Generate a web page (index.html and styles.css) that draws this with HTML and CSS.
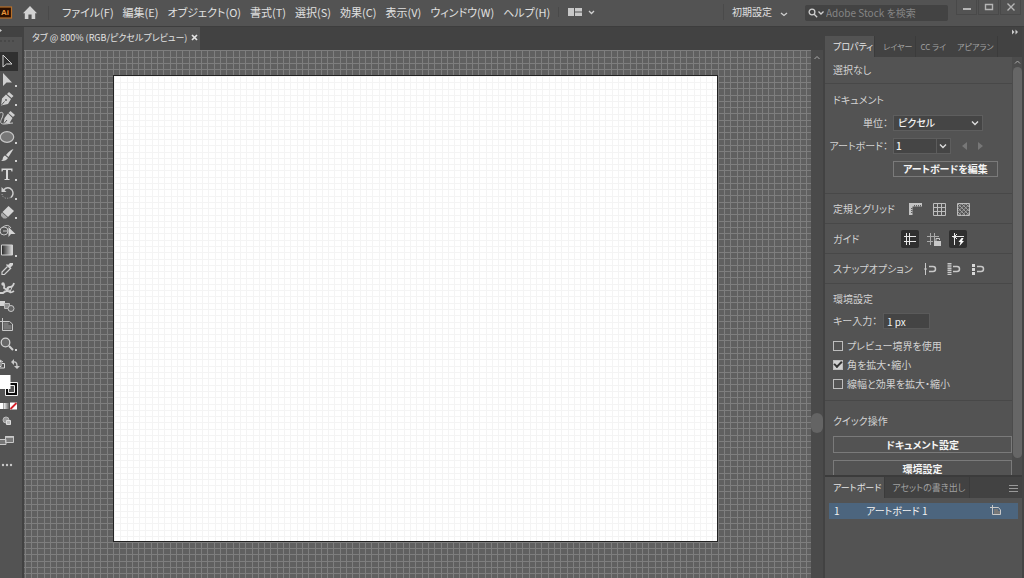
FILE: index.html
```html
<!DOCTYPE html>
<html lang="ja">
<head>
<meta charset="utf-8">
<title>タブ @ 800%</title>
<link rel="stylesheet" href="styles.css">
</head>
<body>
<div class="app">
  <header class="menubar">
    <svg class="logo" viewBox="0 0 13 14" aria-hidden="true"><rect x="-3" y="1" width="14.5" height="11" fill="#2a0f00" stroke="#b8702a" stroke-width="1.2"/><text class="logo-text" x="1" y="9">Ai</text></svg>
    <button class="home" aria-label="ホーム"><svg width="16" height="14" viewBox="0 0 16 14"><path d="M8 0 15 7.2H13.200V13H9.600V8.500H6.400V13H2.800V7.200H1Z" fill="#d2d2d2"/></svg></button>
    <nav class="menus">
      <button>ファイル(F)</button><button>編集(E)</button><button>オブジェクト(O)</button><button>書式(T)</button><button>選択(S)</button><button>効果(C)</button><button>表示(V)</button><button>ウィンドウ(W)</button><button>ヘルプ(H)</button>
    </nav>
    <button class="arrange" aria-label="ドキュメントのレイアウト"><svg width="28" height="10" viewBox="0 0 28 10"><path d="M0 1h6v8H0zM7 1h7v3.500H7zM7 5.500h7V9H7z" fill="#c8c8c8"/><path d="m21 4 2.500 2.500L26 4" fill="none" stroke="#d0d0d0" stroke-width="1.300"/></svg></button>
    <button class="workspace">初期設定<svg width="8" height="6" viewBox="0 0 8 6"><path d="m1 2 3 2.500L7 2" fill="none" stroke="#d0d0d0" stroke-width="1.300"/></svg></button>
    <label class="search"><svg width="17" height="10" viewBox="0 0 17 10"><g fill="none" stroke="#d0d0d0" stroke-width="1.300"><circle cx="4" cy="4" r="2.900"/><path d="m6.200 6.200 3 3M10.500 3.500 13 6l2.500-2.500"/></g></svg><input type="search" aria-label="検索" placeholder="Adobe Stock を検索"></label>
    <div class="window-buttons">
      <button aria-label="最小化"><svg width="10" height="8" viewBox="0 0 10 8"><path d="M1 6h8" stroke="#b5b5b5" stroke-width="2"/></svg></button>
      <button aria-label="最大化"><svg width="10" height="8" viewBox="0 0 10 8"><path d="M1.500 1.500h7v5h-7z" fill="none" stroke="#b5b5b5" stroke-width="1.400"/></svg></button>
      <button aria-label="閉じる"><svg width="10" height="8" viewBox="0 0 10 8"><path d="m1.500 .5 7 7m0-7-7 7" stroke="#b5b5b5" stroke-width="1.400"/></svg></button>
    </div>
  </header>

  <div class="workarea">
    <aside class="toolbar">
      <div class="toolbar-head"><svg width="6" height="7" viewBox="0 0 6 7"><path d="m0 2 2 1.500L0 5z" fill="#c8c8c8"/></svg></div>
      <div class="grip"></div>
      <div class="tools">
        <button class="on" aria-label="選択"><svg viewBox="0 0 22 19"><path d="M3 3v12l3.500-3H12Z" fill="none" stroke="#d4d4d4"/></svg></button>
        <button aria-label="ダイレクト選択"><svg viewBox="0 0 22 19"><path d="M3 2v13l3.500-3.500H12Z" fill="#cfcfcf"/><path class="dot" d="M15 14h2v2h-2z"/></svg></button>
        <button aria-label="ペン"><svg viewBox="0 0 22 19"><path d="m9 2 4.500 4-2 2L7 4zM6 4.500l5 4.500-3 5-7 1.500 1-7z" fill="#cfcfcf"/><path d="m1.500 15 3-3.500" stroke="#535353"/><circle cx="6" cy="10" r=".9" fill="#535353"/><path class="dot" d="M15 14h2v2h-2z"/></svg></button>
        <button aria-label="曲線"><svg viewBox="0 0 22 19"><path d="m10.500 2 4.500 4-2 2-4.500-4zM8 4.500 12.500 9l-3 5-6 1 1-6z" fill="#cfcfcf"/><path d="M0 4c3-2 4 1 2 5s-2 6 2 6 6-1 9-1" fill="none" stroke="#cfcfcf"/><path d="m4 14.500 3-3.500" stroke="#535353"/></svg></button>
        <button aria-label="楕円形"><svg viewBox="0 0 22 19"><ellipse cx="7" cy="9" rx="6.700" ry="5.300" fill="#777" stroke="#c8c8c8" stroke-width="1.200"/><path class="dot" d="M15 14h2v2h-2z"/></svg></button>
        <button aria-label="ブラシ"><svg viewBox="0 0 22 19"><path d="M13.500 3 8.500 11 6 9Q10 4 13.500 3M5 9.500l3 2.500Q6 15.500 1 15q2-1 2-3.500 1-2 2-2" fill="#d4d4d4"/><path class="dot" d="M15 14h2v2h-2z"/></svg></button>
        <button aria-label="文字"><svg viewBox="0 0 22 19"><path d="M1.500 3.500h11v3h-1l-.5-1.500H8V14h1.500v1h-5v-1H6V5H3l-.5 1.500h-1z" fill="#d8d8d8"/><path class="dot" d="M15 14h2v2h-2z"/></svg></button>
        <button aria-label="回転"><svg viewBox="0 0 22 19"><path d="M3.500 6Q8 1.500 12 6q2.500 4-1 7.500" fill="none" stroke="#cfcfcf" stroke-width="1.400"/><path d="M1.500 3v5h5z" fill="#cfcfcf"/><path d="M2 10q1 6 9 3.500" fill="none" stroke="#bbb" stroke-dasharray="1 1.500"/><path class="dot" d="M15 14h2v2h-2z"/></svg></button>
        <button aria-label="消しゴム"><svg viewBox="0 0 22 19"><path d="m8.500 3 5.500 5-6 6-5.500-5z" fill="#d4d4d4"/><path d="m2 9.500 5.500 5-1.500 1H3.500L1 13v-2z" fill="#a9a9a9"/><path class="dot" d="M15 14h2v2h-2z"/></svg></button>
        <button aria-label="シェイプ形成"><svg viewBox="0 0 22 19"><g fill="none" stroke="#c4c4c4"><circle cx="4" cy="9" r="4"/><path d="M2 5.500Q8 1 11 6M3 9h5"/></g><path d="M8.500 5v10l2.500-3h4.500z" fill="#d4d4d4"/></svg></button>
        <button aria-label="グラデーション"><svg viewBox="0 0 22 19"><defs><linearGradient id="grad"><stop stop-color="#222"/><stop offset="1" stop-color="#ddd"/></linearGradient></defs><path d="M1.500 4h11v10h-11z" fill="url(#grad)" stroke="#d0d0d0"/><path class="dot" d="M15 14h2v2h-2z"/></svg></button>
        <button aria-label="スポイト"><svg viewBox="0 0 22 19"><path d="m13 3-3 0-2 2-1-1-1 1 4.500 4.500 1-1-1-1 2.500-2.500z" fill="#d4d4d4"/><path d="M7.500 6.500 2 12v2.500h2.500L10 9" fill="none" stroke="#d0d0d0" stroke-width="1.200"/></svg></button>
        <button aria-label="パペットワープ"><svg viewBox="0 0 22 19"><path d="M0 14h3q2-2 4-2t3 1 4-1M3 5q2 1 1 4l3 2q0-3 3-3t4-4" fill="none" stroke="#cfcfcf" stroke-width="1.800"/><circle cx="3" cy="5" r="1.700" fill="#cfcfcf"/><path d="m8 9 2 4 2-5" stroke="#cfcfcf" fill="none"/></svg></button>
        <button aria-label="ブレンド"><svg viewBox="0 0 22 19"><path d="M0 4h5v5H0z" fill="#d4d4d4"/><path d="M4.500 6.500h5v5h-5z" fill="#8d8d8d" stroke="#bbb"/><circle cx="11" cy="11.500" r="3" fill="#656565" stroke="#c8c8c8"/></svg></button>
        <button aria-label="アートボード"><svg viewBox="0 0 22 19"><path d="M2.500 2v12.500h10V8l-3-2.500H0" fill="none" stroke="#c8c8c8"/><path d="M3.500 6.500h5v2.500h3v4.500h-8z" fill="#777"/></svg></button>
        <button aria-label="ズーム"><svg viewBox="0 0 22 19"><circle cx="5.500" cy="7.500" r="4.300" fill="#686868" stroke="#d0d0d0" stroke-width="1.300"/><path d="m9 11 4 4" stroke="#d0d0d0" stroke-width="2"/><path class="dot" d="M15 14h2v2h-2z"/></svg></button>
      </div>
      <div class="color-tools">
        <button aria-label="塗りと線を入れ替え"><svg width="22" height="16" viewBox="0 0 22 16"><path d="M-2 6.500h3v5h-3M2 8.500h2.500v4.500H-1M0 5l3 2" fill="none" stroke="#ddd"/><path d="M13 7q4-1 4 4" fill="none" stroke="#c8c8c8" stroke-width="1.300"/><path d="m11 7 3-3v6zM14 11h6l-3 3z" fill="#c8c8c8"/></svg></button>
        <button aria-label="塗りと線"><svg width="22" height="28" viewBox="0 0 22 28"><path d="M5.500 11.500h12v13h-12z" fill="#090909" stroke="#eee"/><path d="M8.500 14.500h6v7h-6z" fill="#535353" stroke="#eee"/><path d="M0 4h10.500v14H0z" fill="#fff"/></svg></button>
        <button aria-label="カラー種別"><svg width="22" height="14" viewBox="0 0 22 14"><defs><linearGradient id="mini"><stop stop-color="#eee"/><stop offset="1" stop-color="#666"/></linearGradient></defs><path d="M0 4h3.500v6H0z" fill="#fff"/><path d="M4 4h5v6H4z" fill="url(#mini)"/><path d="M10 3.500h7v7h-7z" fill="#fff"/><path d="m10.500 10 6-6" stroke="#d3222b" stroke-width="1.800"/></svg></button>
        <button aria-label="描画方法"><svg width="22" height="18" viewBox="0 0 22 18"><circle cx="6" cy="7" r="3" fill="#999" stroke="#bbb"/><path d="M6.500 7.500h4v4h-4z" fill="#bbb" stroke="#ddd"/></svg></button>
        <button aria-label="スクリーンモード"><svg width="22" height="22" viewBox="0 0 22 22"><path d="M5.500 5.500h8v6h-8zM-1 8.500h7v5h-7z" fill="#777" stroke="#c8c8c8"/><path d="M5 6h9" stroke="#ccc" stroke-width="1.500"/></svg></button>
        <button aria-label="ツールバーを編集"><svg width="22" height="24" viewBox="0 0 22 24"><g fill="#c8c8c8"><circle cx="3" cy="12" r="1.200"/><circle cx="7" cy="12" r="1.200"/><circle cx="11" cy="12" r="1.200"/></g></svg></button>
      </div>
    </aside>

    <main class="document">
      <div class="doc-tabs"><div class="doc-tab"><span>タブ @ 800% (RGB/ピクセルプレビュー)</span><button aria-label="閉じる"><svg width="7" height="7" viewBox="0 0 7 7"><path d="m1 1 5 5m0-5L1 6" stroke="#e4e4e4" stroke-width="1.700"/></svg></button></div></div>
      <div class="doc-view">
        <div class="canvas">
          <svg class="grid" aria-hidden="true"><defs><pattern id="pasteboard" width="63" height="63" patternUnits="userSpaceOnUse"><path class="grid-line" d="M1.500 0v63M7.500 0v63M13.500 0v63M20.500 0v63M26.500 0v63M32.500 0v63M39.500 0v63M45.500 0v63M51.500 0v63M57.500 0v63M0 .5h63M0 7.500h63M0 13.500h63M0 19.500h63M0 26.500h63M0 32.500h63M0 38.500h63M0 45.500h63M0 51.500h63M0 57.500h63"/></pattern></defs><rect width="100%" height="100%" fill="url(#pasteboard)"/></svg>
          <div class="artboard"><svg class="grid" aria-hidden="true"><defs><pattern id="page" width="63" height="63" patternUnits="userSpaceOnUse"><path class="page-line" d="M.5 0v63M6.500 0v63M13.500 0v63M19.500 0v63M25.500 0v63M31.500 0v63M38.500 0v63M44.500 0v63M50.500 0v63M57.500 0v63M0 .5h63M0 6.500h63M0 13.500h63M0 19.500h63M0 25.500h63M0 31.500h63M0 38.500h63M0 44.500h63M0 50.500h63M0 57.500h63"/></pattern></defs><rect width="100%" height="100%" fill="url(#page)"/></svg></div>
        </div>
        <div class="vscroll"><svg width="12" height="14" viewBox="0 0 12 14"><path d="m3.500 9 2.500-2.500L8.500 9" fill="none" stroke="#aaa"/></svg><div class="vthumb"></div></div>
      </div>
    </main>

    <aside class="panels">
      <div class="panel-head"><svg width="8" height="6" viewBox="0 0 8 6"><path d="m1 .5 2.500 2.500L1 5.500zm3.500 0L7 3 4.500 5.500z" fill="#ccc"/></svg></div>
      <div class="tabs top-tabs"><button class="active">プロパティ</button><button>レイヤー</button><button class="bare">CC ライ</button><button>アピアラン</button></div>
      <div class="properties">
        <div class="sections">
          <section class="selection">選択なし</section>
          <section class="doc-settings">
            <h2>ドキュメント</h2>
            <div class="field"><label for="unit">単位：</label><span class="select unit"><select id="unit"><option>ピクセル</option></select><svg width="8" height="6" viewBox="0 0 8 6"><path d="m1 1.500 3 3 3-3" fill="none" stroke="#ddd" stroke-width="1.400"/></svg></span></div>
            <div class="field"><label for="board">アートボード：</label><span class="select board"><select id="board"><option>1</option></select><svg width="8" height="6" viewBox="0 0 8 6"><path d="m1 1.500 3 3 3-3" fill="none" stroke="#ddd" stroke-width="1.400"/></svg></span><button class="step" aria-label="前へ"><svg width="5" height="8" viewBox="0 0 5 8"><path d="M5 0v8L0 4z" fill="#777"/></svg></button><button class="step" aria-label="次へ"><svg width="5" height="8" viewBox="0 0 5 8"><path d="M0 0v8l5-4z" fill="#777"/></svg></button></div>
            <div class="field"><button class="outline edit">アートボードを編集</button></div>
          </section>
          <section class="icon-row wide"><span>定規とグリッド</span><div class="icons">
            <button aria-label="定規"><svg viewBox="0 0 18 18"><path d="M3 3h13v3.500H6.500V15H3z" fill="#c4c4c4"/><path d="M8.500 5v1.500M10.500 5v1.500M12.500 5v1.500M14.500 5v1.500M5 8.500h1.500M5 10.500h1.500M5 12.500h1.500" stroke="#606060"/></svg></button>
            <button aria-label="グリッド"><svg viewBox="0 0 18 18"><path d="M3.500 3.500h12v12h-12zM7.500 3v13M11.500 3v13M3 7.500h13M3 11.500h13" fill="none" stroke="#bdbdbd"/></svg></button>
            <button aria-label="透明グリッド"><svg viewBox="0 0 18 18"><path d="M3.500 3.500h12v12h-12z" fill="none" stroke="#bdbdbd"/><path d="M4 7.500 7.500 4M4 11.500 11.500 4M4 15.500 15.500 4M8 15.500 15.500 8M12 15.500l3.500-3.500M7.500 15.500 4 12M11.500 15.500 4 8M15.500 15.500 4 4M15.500 11.500 8 4M15.500 7.500 12 4" stroke="#a0a0a0"/></svg></button></div></section>
          <section class="icon-row"><span>ガイド</span><div class="icons">
            <button class="pressed" aria-label="ガイドを表示"><svg viewBox="0 0 18 18"><path d="M3 6.500h12M3 11.500h12M5.500 3v12M8.500 3v12" stroke="#e8e8e8"/></svg></button>
            <button aria-label="ガイドをロック"><svg viewBox="0 0 18 18"><path d="M2 6.500h12M2 11.500h6M5.500 3v12M9.500 3v8" stroke="#aaa"/><path d="M9 11h7v5H9z" fill="#c8c8c8"/><path d="M11 11V8.500h3.500V10" fill="none" stroke="#c8c8c8"/></svg></button>
            <button class="pressed" aria-label="スマートガイド"><svg viewBox="0 0 18 18"><path d="M3 6.500h12M5.500 3v12M8 4 4.500 7.500M8 9 5 6" stroke="#e8e8e8"/><path d="m12.500 8-3 4h2l-1 4 4.500-5h-2l1.500-3z" fill="#fff"/></svg></button></div></section>
          <section class="icon-row wide"><span>スナップオプション</span><div class="icons">
            <button aria-label="ポイントにスナップ"><svg viewBox="0 0 18 18"><path d="M4.500 3v12M3 9h3" stroke="#c8c8c8"/><path d="M8 6.500h4q2.500 0 2.500 2.500t-2.500 2.500H8" fill="none" stroke="#c8c8c8" stroke-width="1.500"/></svg></button>
            <button aria-label="グリッドにスナップ"><svg viewBox="0 0 18 18"><path d="M4.500 3v12" stroke="#c8c8c8" stroke-width="4" stroke-dasharray="1.500 .7"/><path d="M8 6.500h4q2.500 0 2.500 2.500t-2.500 2.500H8" fill="none" stroke="#c8c8c8" stroke-width="1.500"/></svg></button>
            <button aria-label="ピクセルにスナップ"><svg viewBox="0 0 18 18"><path d="M3 4h3v3H3zM3 8h3v3H3zM3 12h3v3H3z" fill="#d8d8d8"/><path d="M8 6.500h4q2.500 0 2.500 2.500t-2.500 2.500H8" fill="none" stroke="#c8c8c8" stroke-width="1.500"/></svg></button></div></section>
          <section class="prefs">
            <h2>環境設定</h2>
            <div class="key"><label for="key">キー入力：</label><input id="key" type="text" value="1 px"></div>
            <label class="check"><input type="checkbox">プレビュー境界を使用</label>
            <label class="check"><input type="checkbox" checked>角を拡大・縮小</label>
            <label class="check"><input type="checkbox">線幅と効果を拡大・縮小</label>
          </section>
          <section class="quick">
            <h2>クイック操作</h2>
            <button class="outline">ドキュメント設定</button>
            <button class="outline">環境設定</button>
          </section>
        </div>
        <div class="pscroll"><svg width="9" height="10" viewBox="0 0 9 10"><path d="m2 6.500 2.500-2.500L7 6.500" fill="none" stroke="#aaa"/></svg><div class="pthumb"></div></div>
      </div>
      <div class="artboards">
        <div class="tabs"><button class="active">アートボード</button><button>アセットの書き出し</button><button class="more" aria-label="パネルメニュー"><svg width="9" height="8" viewBox="0 0 9 8"><path d="M0 1.500h9M0 4.500h9M0 7.500h9" stroke="#999"/></svg></button></div>
        <div class="board-row"><span class="num">1</span><span class="name">アートボード 1</span><svg width="12" height="12" viewBox="0 0 12 12"><path d="M2.500 0v9.500h8V5l-2-2.500H0" fill="none" stroke="#c8c8c8"/><path d="M4 4h4v2h2v3H4z" fill="#777"/></svg></div>
      </div>
    </aside>
  </div>
</div>
</body>
</html>
```
FILE: styles.css
```css
* { box-sizing: border-box; }
body { margin: 0; background: #535353; color: #d2d2d2; font: 10px/16px "Noto Sans CJK JP", "Noto Sans", sans-serif; font-feature-settings: "palt"; }
button, input, select { margin: 0; padding: 0; border: 0; background: none; color: inherit; font: inherit; font-feature-settings: inherit; border-radius: 0; }
button { white-space: nowrap; display: block; }
svg { display: block; flex: none; }
h2 { margin: 0; font-size: inherit; font-weight: 400; }
.app { height: 100vh; min-height: 500px; display: flex; flex-direction: column; overflow: hidden; }

.menubar { height: 26px; flex: none; display: flex; align-items: center; padding-bottom: 2px; background: #535353; color: #e0e0e0; }
.logo { width: 13px; height: 14px; margin-top: 2px; }
.logo-text { font: bold 8px "Liberation Sans", sans-serif; fill: #e9963c; }
.home { margin: 2px 0 0 9px; padding-right: 10px; border-right: 1px solid #4a4a4a; }
.menus { display: flex; gap: 9px; margin-left: 13px; }
.menus button { font-size: 11px; }
.arrange { margin-left: 8px; padding-left: 9px; border-left: 1px solid #494949; }
.workspace { margin-left: auto; display: flex; align-items: center; gap: 8px; padding: 0 8px; border-left: 1px solid #4a4a4a; }
.workspace svg { margin-top: 4px; }
.search { width: 143px; height: 16px; margin: 2px 0 0 9px; padding-left: 3px; display: flex; align-items: center; gap: 1px; background: #434343; border-radius: 2px; }
.search input { min-width: 0; flex: 1; outline: 0; }
.search input::placeholder { color: #858585; opacity: 1; }
.window-buttons { display: flex; align-self: flex-start; margin-left: 8px; gap: 1px; padding-right: 3px; }
.window-buttons button { width: 21px; height: 15px; display: flex; align-items: center; justify-content: center; border: 1px solid #494949; border-top: 0; }

.workarea { flex: 1; min-height: 0; display: flex; border-top: 1px solid #3d3d3d; background: #424242; }
.toolbar { width: 24px; flex: none; background: #535353; border-right: 2px solid #424242; }
.toolbar-head { height: 10px; background: #424242; }
.grip { height: 4px; margin: 1px 8px 10px 0; border-bottom: 2px dotted #484848; }
.tools { height: 302px; display: flex; flex-direction: column; }
.tools button { flex: 1; min-height: 0; }
.tools svg { width: 22px; height: 19px; }
.tools .on { background: linear-gradient(to right, #303030 18px, #535353 18px); }
.dot { fill: #d0d0d0; }
.color-tools { margin-top: 1px; }

.document { flex: 1; min-width: 0; display: flex; flex-direction: column; }
.doc-tabs { height: 23px; flex: none; display: flex; }
.doc-tab { display: flex; align-items: center; gap: 4px; padding: 0 2px 2px 8px; background: #535353; color: #e2e2e2; font-size: 9px; white-space: nowrap; }
.doc-view { flex: 1; min-height: 0; display: flex; }
.canvas { flex: 1; min-width: 0; display: flex; position: relative; padding: 25px 93px 36px 89px; background: #606060; }
.grid { position: absolute; inset: 0; width: 100%; height: 100%; }
.grid-line { stroke: #7e7e7e; fill: none; }
.page-line { stroke: #f4f4f4; fill: none; }
.artboard { flex: 1; position: relative; background: #fff; border: 1px solid #222; }
.vscroll { width: 12px; background: #4a4a4a; display: flex; flex-direction: column; }
.vthumb { height: 20px; margin: auto 0 145px; border-radius: 6px; background: #646464; }

.panels { width: 201px; flex: none; display: flex; flex-direction: column; padding-left: 2px; background: #424242; border-right: 2px solid #444; }
.panel-head { height: 9px; flex: none; display: flex; justify-content: flex-end; align-items: center; padding-right: 3px; }
.tabs { height: 21px; flex: none; display: flex; color: #a0a0a0; font-size: 9px; }
.tabs button { padding: 0 4px 0 7px; border-right: 1px solid #3b3b3b; }
.tabs .active { background: #535353; color: #e6e6e6; padding: 0 3px 0 8px; }
.top-tabs button { font-size: 8px; padding: 0 3px 0 8px; }
.top-tabs .active { font-size: 9px; padding: 0 1px 0 8px; }
.top-tabs .bare { border: 0; padding: 0 3px 0 4px; }
.properties { flex: 1; min-height: 0; display: flex; background: #535353; }
.sections { flex: 1; min-width: 0; overflow: hidden; display: flex; flex-direction: column; }
section { flex: none; padding-left: 8px; border-bottom: 1px solid #484848; }
.selection { height: 27px; line-height: 26px; }
.doc-settings { padding: 8px 0 16px; }
.doc-settings h2 { padding-left: 8px; }
.field { height: 16px; margin-top: 7px; display: grid; grid-template-columns: 63px auto auto auto 1fr; column-gap: 5px; align-items: center; }
.field label { justify-self: end; white-space: nowrap; }
.select { height: 16px; display: grid; align-items: center; background: #454545; border: 1px solid #5e5e5e; color: #f2f2f2; }
.select select, .select svg { grid-area: 1 / 1; }
.select select { appearance: none; width: 100%; height: 14px; line-height: 14px; padding-left: 4px; font-weight: 500; }
.select svg { justify-self: end; margin-right: 3px; pointer-events: none; }
.unit { width: 90px; grid-column: 2 / 6; }
.board { width: 58px; }
.board select { padding-left: 2px; background: linear-gradient(to left, transparent 13px, #5c5c5c 13px, #5c5c5c 14px, transparent 14px); }
.step { padding-left: 6px; }
.outline { height: 17px; border: 1px solid #7a7a7a; color: #f4f4f4; font-weight: 700; line-height: 14px; text-align: center; }
.edit { width: 105px; height: 16px; grid-column: 2 / 6; }
.icon-row { height: 30px; display: flex; align-items: center; gap: 3px; }
.icon-row.wide { gap: 8px; }
.icon-row span { min-width: 65px; white-space: nowrap; }
.icons { display: flex; gap: 6px; }
.icons button { width: 18px; height: 18px; border-radius: 2px; }
.icons .pressed { background: #2f2f2f; }
.prefs { padding-top: 7px; padding-bottom: 7px; }
.key { display: flex; gap: 2px; align-items: center; margin: 6px 0 7px; }
.key label { min-width: 48px; }
.key input { width: 47px; height: 16px; padding-left: 3px; background: #444; border: 1px solid #5a5a5a; color: #f2f2f2; line-height: 14px; }
.check { display: flex; align-items: center; gap: 4px; height: 19px; }
.check input { appearance: none; width: 10px; height: 10px; border: 1px solid #bdbdbd; }
.check input:checked { background: #d0d0d0; display: grid; place-items: center; }
.check input:checked::after { content: ""; width: 6px; height: 3px; margin-bottom: 2px; border: solid #333; border-width: 0 0 2px 2px; rotate: -45deg; }
.quick { padding-top: 12px; display: grid; gap: 7px; border: 0; }
.pscroll { width: 10px; flex: none; padding-left: 1px; background: #4c4c4c; display: flex; flex-direction: column; }
.pthumb { flex: 1; margin-bottom: 17px; border-radius: 5px; background: #666; }
.artboards { height: 103px; flex: none; padding-top: 2px; background: linear-gradient(#3b3b3b 2px, #424242 2px, #424242 23px, #535353 23px); }
.tabs .more { margin-left: auto; border: 0; padding: 0 4px; }
.board-row { display: flex; align-items: center; height: 16px; margin: 5px 4px 0; padding: 0 16px 0 5px; background: #4c657e; color: #f2f2f2; }
.num { width: 32px; }
.name { flex: 1; }
```
